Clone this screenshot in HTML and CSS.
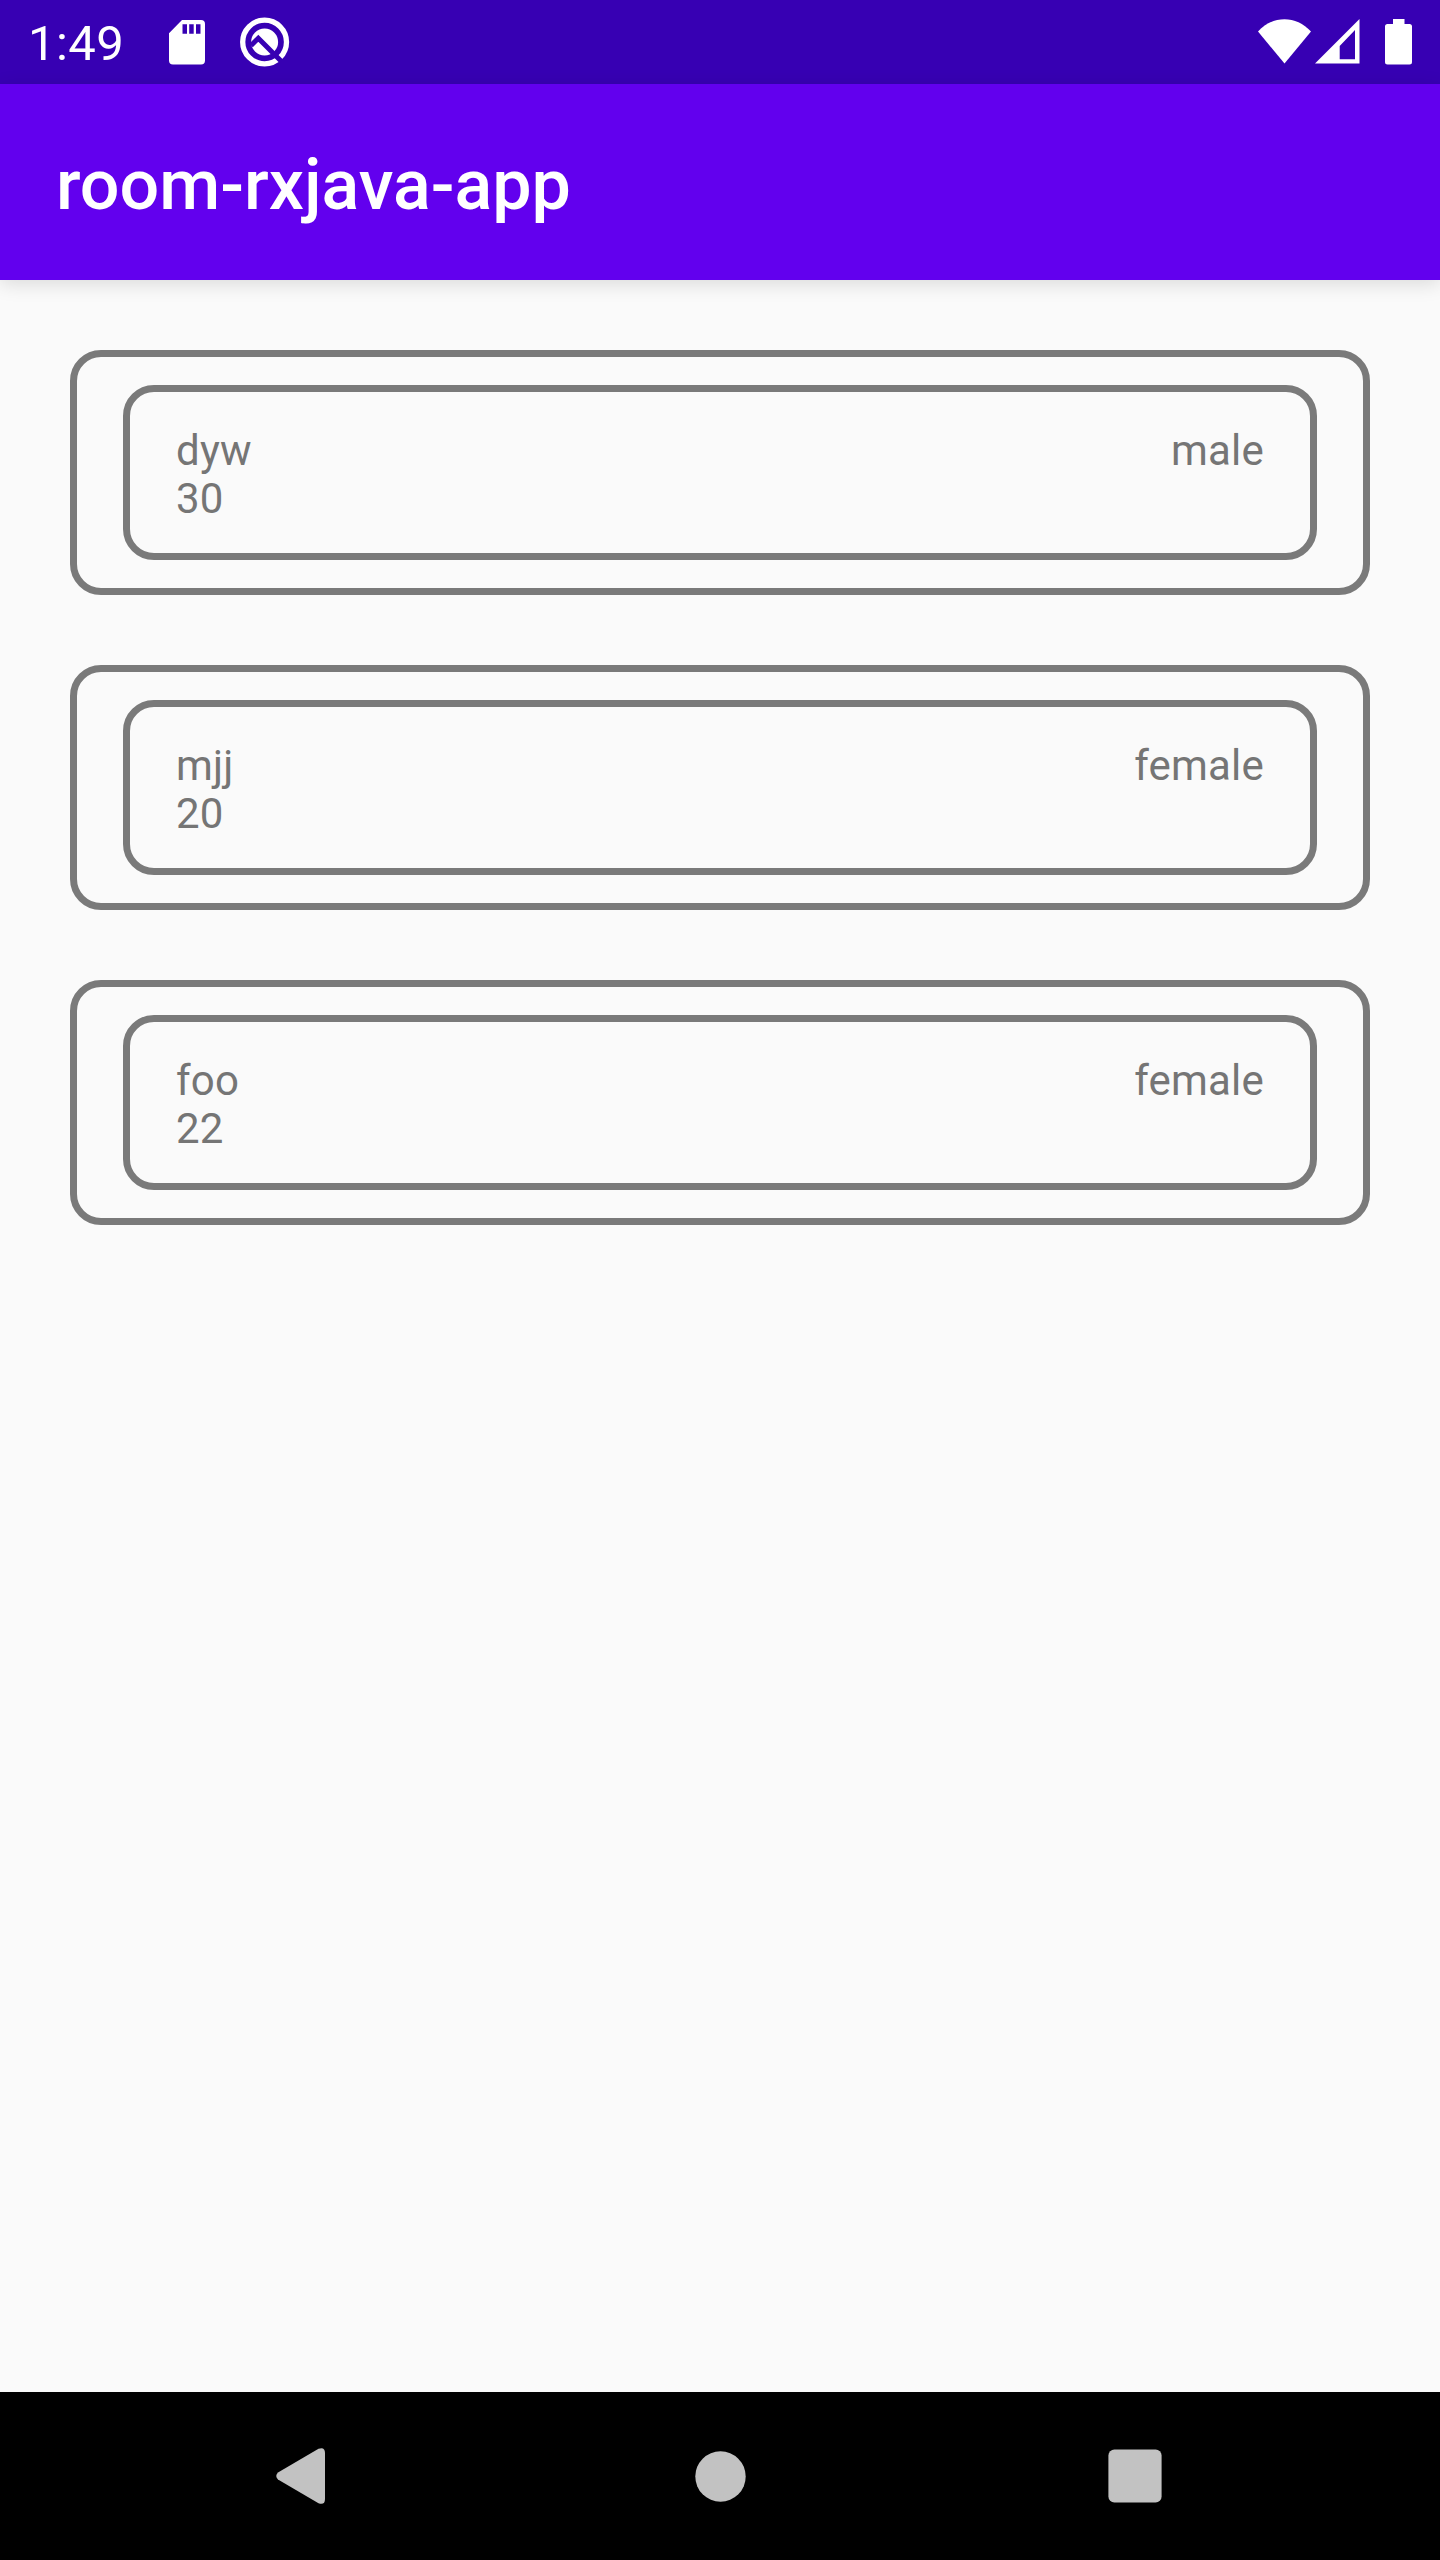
FILE: index.html
```html
<!DOCTYPE html>
<html lang="en">
<head>
<meta charset="utf-8">
<title>room-rxjava-app</title>
<link rel="stylesheet" href="styles.css">
</head>
<body>
<header class="status-bar">
  <div class="status-left">
    <span class="clock">1:49</span>
    <svg class="icon-sd" width="36" height="45" viewBox="0 0 36 45" fill="#fff"><path fill-rule="evenodd" d="M13 0H32Q36 0 36 4V40.500Q36 44.500 32 44.500H4Q0 44.500 0 40.500V13.200ZM13.500 4.300V13.700H18V4.300ZM20.200 4.300V13.700H24.700V4.300ZM27 4.300V13.700H31.500V4.300Z"/></svg>
    <svg class="icon-q" width="50" height="50" viewBox="0 0 50 50"><circle cx="24.600" cy="25" r="21.900" fill="none" stroke="#fff" stroke-width="5.300"/><circle cx="24.600" cy="25" r="13.500" fill="#fff"/><path d="M11 28.500L18.300 21.200L41.500 44.400" fill="none" stroke="#3700b3" stroke-width="5"/></svg>
  </div>
  <div class="status-right">
    <svg width="54" height="45" viewBox="0 0 54 45" fill="#fff"><path d="M0 12.500C15-4 38-4 53 12.500L26.500 44.500Z"/></svg>
    <svg class="icon-signal" width="45" height="45" viewBox="0 0 45 45" fill="#fff"><path fill-rule="evenodd" d="M44.500 0V44.500H0ZM40 11L24.700 27V40.300H40Z"/></svg>
    <svg class="icon-battery" width="28" height="46" viewBox="0 0 28 46" fill="#fff"><path d="M8 0H19.500V5H24.500Q27 5 27 7.500V43Q27 45.500 24.500 45.500H2.500Q0 45.500 0 43V7.500Q0 5 2.500 5H8Z"/></svg>
  </div>
</header>
<div class="app-bar"><h1 class="title">room-rxjava-app</h1></div>
<main class="list">
  <section class="card"><div class="card-inner"><div><p>dyw</p><p>30</p></div><p>male</p></div></section>
  <section class="card"><div class="card-inner"><div><p>mjj</p><p>20</p></div><p>female</p></div></section>
  <section class="card"><div class="card-inner"><div><p>foo</p><p>22</p></div><p>female</p></div></section>
</main>
<nav class="nav-bar">
  <svg width="50" height="56" viewBox="0 0 50 56" fill="#c2c2c2"><path d="M2 24.500L42.500 0.700Q49 -1.500 49 5V51Q49 57.500 42.500 55.300L2 31.500Q-1.500 28 2 24.500Z"/></svg>
  <svg class="nav-home" width="51" height="51" viewBox="0 0 51 51" fill="#c2c2c2"><circle cx="25.500" cy="25.500" r="25.200"/></svg>
  <svg width="54" height="54" viewBox="0 0 54 54" fill="#c2c2c2"><rect x=".4" y=".4" width="53.200" height="53.200" rx="6"/></svg>
</nav>
</body>
</html>
```
FILE: styles.css
```css
* { box-sizing: border-box; }
body {
  margin: 0;
  width: 1440px;
  height: 2560px;
  display: flex;
  flex-direction: column;
  background: #fafafa;
  font-family: Roboto, sans-serif;
  overflow: hidden;
}
svg { display: block; flex: none; }
p, h1 { margin: 0; }
.status-bar {
  height: 84px;
  flex: none;
  display: flex;
  justify-content: space-between;
  align-items: flex-start;
  background: #3700b3;
  color: #fff;
}
.status-left { display: flex; padding-left: 28px; }
.clock { width: 141px; font-size: 49px; line-height: 58px; padding-top: 15px; letter-spacing: .4px; }
.icon-sd { margin-top: 20px; }
.icon-q { margin: 17px 0 0 35px; }
.status-right { display: flex; padding: 19px 27px 0 0; }
.icon-signal { margin-left: 3px; }
.icon-battery { margin-left: 25px; }
.app-bar {
  height: 196px;
  flex: none;
  display: flex;
  align-items: center;
  padding: 6px 56px 0;
  background: #6200ee;
  color: #fff;
  box-shadow: 0 4px 18px rgba(0, 0, 0, .13);
}
.title { font-size: 70px; font-weight: 500; line-height: 82px; }
.list {
  flex: 1;
  display: flex;
  flex-direction: column;
  gap: 70px;
  padding: 70px;
}
.card {
  height: 245px;
  padding: 28px 46px;
  border: 7px solid #7a7a7a;
  border-radius: 31px;
}
.card-inner {
  height: 175px;
  display: flex;
  justify-content: space-between;
  padding: 35px 46px;
  border: 7px solid #7a7a7a;
  border-radius: 31px;
  color: #757575;
  font-size: 42px;
  line-height: 48px;
  letter-spacing: .2px;
}
.nav-bar {
  height: 168px;
  flex: none;
  display: grid;
  grid-template-columns: 1fr auto 1fr;
  align-items: center;
  padding: 0 278px 0 276px;
  background: #000;
}
.nav-home { margin-left: 2px; }
.nav-bar svg:last-child { justify-self: end; }
```
